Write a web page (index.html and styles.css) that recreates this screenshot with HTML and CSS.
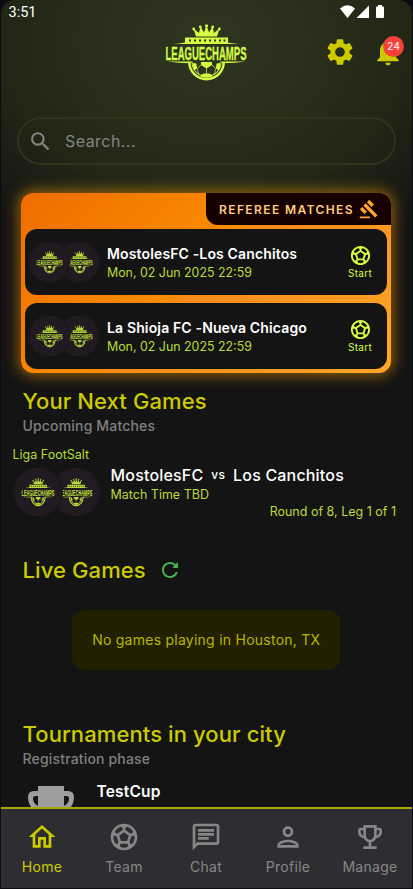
FILE: index.html
```
<!DOCTYPE html>
<html lang="en">
<head>
  <meta charset="UTF-8" />
  <meta name="viewport" content="width=device-width, initial-scale=1.0"/>
  <title>LeagueChamps</title>
  <link rel="stylesheet" href="styles.css">
</head>
<body>
  <!-- Shared symbols -->
  <svg class="symbols">
    <symbol id="logo" viewBox="0 0 84 58" preserveAspectRatio="none">
      <path d="M32 12.500L29.500 4.500 35 9 36.500 2.500 40 8.500 42.500 1 45 8.500 48.500 2.500 50 9 55.500 4.500 53 12.500z"/>
      <circle cx="29.700" cy="5" r="1.400"/><circle cx="36.300" cy="3" r="1.400"/><circle cx="42.500" cy="1.800" r="1.600"/>
      <circle cx="48.700" cy="3" r="1.400"/><circle cx="55.300" cy="5" r="1.400"/>
      <path fill-rule="evenodd" d="M21 13.500h43v6H21zM25 15.500v2h2v-2zM30 15.500v2h2v-2zM35 15.500v2h2v-2zM40 15.500v2h2v-2zM45 15.500v2h2v-2zM50 15.500v2h2v-2zM55 15.500v2h2v-2zM59.500 15.500v2h2v-2z"/>
      <path d="M10 20Q20 19.200 23 18h38Q64 19.200 75 20zM3 37.500h26l-3 1.700Q14 39 3 37.500zM82 37.500H56l3 1.700Q71 39 82 37.500z"/>
      <path d="M24 38a18.500 18.500 0 0 0 37 0h-2.500a16 16 0 0 1-32 0z"/>
      <path d="M27.500 38a15 15 0 0 0 30 0h-1a14 14 0 0 1-28 0z"/>
      <path d="M37 38h11v3l-5.500 3.500-5.500-3.500zM28.500 39l4 .5.500 5-3 2zM56.500 39l-4 .5-.5 5 3 2zM37.500 50.500l2.500-1h5l2.500 1 1.500 1.700a15 15 0 0 1-13 0z"/>
      <path class="seam" d="M42.500 44v6M37 41l-4 3.500 2 6M48 41l4 3.500-2 6"/>
      <text x="1.500" y="35.700" textLength="81" lengthAdjust="spacingAndGlyphs">LEAGUECHAMPS</text>
    </symbol>
    <symbol id="ball" viewBox="0 0 24 24">
      <path d="M12 2C6.480 2 2 6.480 2 12s4.480 10 10 10 10-4.480 10-10S17.520 2 12 2zm1 3.300l1.350-.95c1.820.56 3.370 1.760 4.380 3.340l-.39 1.340-1.350.46L13 6.700V5.300zm-3.350-.95L11 5.300v1.400L7.010 9.490l-1.350-.46-.39-1.340c1.010-1.570 2.560-2.770 4.380-3.340zM7.080 17.110l-1.140.1C4.730 15.810 4 13.990 4 12c0-.12.01-.23.02-.35l1-.73 1.380.48 1.460 4.340-.78 1.370zm7.420 2.480c-.79.26-1.630.41-2.500.41s-1.710-.15-2.500-.41l-.69-1.490.64-1.100h5.110l.64 1.110-.7 1.480zM14.270 15H9.730l-1.350-4.020L12 8.440l3.630 2.540L14.270 15zm3.790 2.210l-1.140-.1-.79-1.370 1.460-4.340 1.390-.47 1 .73c.01.11.02.22.02.34 0 1.990-.73 3.810-1.940 5.210z"/>
    </symbol>
  </svg>

  <div class="phone">
    <main class="content">
      <div class="status-bar">
        <span>3:51</span>
        <svg class="status-icons" viewBox="0 0 46 14">
          <path d="M0 3.500Q7.500-3 15 3.500L7.500 13z"/>
          <path d="M29 .5V13H16.500z"/>
          <path d="M38 0h4v1.500h1a1 1 0 0 1 1 1V12a1 1 0 0 1-1 1h-6a1 1 0 0 1-1-1V2.500a1 1 0 0 1 1-1h1z"/>
        </svg>
      </div>

      <header class="header">
        <svg class="header-logo logo"><use href="#logo"/></svg>
        <div class="header-actions">
          <svg class="icon" viewBox="0 0 24 24"><path d="M19.140 12.940c.04-.3.06-.61.06-.94 0-.32-.02-.64-.07-.94l2.030-1.580c.18-.14.23-.41.12-.61l-1.920-3.320c-.12-.22-.37-.29-.59-.22l-2.390.96c-.5-.38-1.030-.7-1.620-.94l-.36-2.540c-.04-.24-.24-.41-.48-.41h-3.840c-.24 0-.43.17-.47.41l-.36 2.540c-.59.24-1.130.57-1.620.94l-2.390-.96c-.22-.08-.47 0-.59.22L2.740 8.870c-.12.21-.08.47.12.61l2.030 1.580c-.05.3-.09.63-.09.94s.02.64.07.94l-2.030 1.580c-.18.14-.23.41-.12.61l1.920 3.320c.12.22.37.29.59.22l2.390-.96c.5.38 1.030.7 1.620.94l.36 2.540c.05.24.24.41.48.41h3.840c.24 0 .44-.17.47-.41l.36-2.540c.59-.24 1.130-.56 1.620-.94l2.390.96c.22.08.47 0 .59-.22l1.920-3.320c.12-.22.07-.47-.12-.61l-2.010-1.580zM12 15.600c-1.980 0-3.600-1.620-3.600-3.600s1.620-3.600 3.600-3.600 3.600 1.620 3.600 3.600-1.620 3.600-3.600 3.600z"/></svg>
          <div class="bell">
            <svg class="icon" viewBox="0 0 24 24"><path d="M12 22c1.100 0 2-.9 2-2h-4c0 1.100.9 2 2 2zm6-6v-5c0-3.070-1.640-5.640-4.500-6.320V4c0-.83-.67-1.500-1.500-1.500s-1.500.67-1.500 1.500v.68C7.630 5.360 6 7.920 6 11v5l-2 2v1h16v-1l-2-2z"/></svg>
            <span class="badge">24</span>
          </div>
        </div>
      </header>

      <div class="search">
        <svg viewBox="0 0 24 24"><path d="M15.500 14h-.79l-.28-.27C15.410 12.590 16 11.110 16 9.500 16 5.910 13.090 3 9.500 3S3 5.910 3 9.500 5.910 16 9.500 16c1.610 0 3.090-.59 4.230-1.570l.27.28v.79l5 4.990L20.490 19l-4.990-5zm-6 0C7.010 14 5 11.990 5 9.500S7.010 5 9.500 5 14 7.010 14 9.500 11.990 14 9.500 14z"/></svg>
        <span>Search...</span>
      </div>

      <section class="referee">
        <div class="referee-tab">
          <span>REFEREE MATCHES</span>
          <svg viewBox="0 0 24 24"><path d="M1 21h12v2H1zM5.245 8.070l2.830-2.827 14.140 14.142-2.828 2.828zM12.317 1l5.657 5.656-2.830 2.830-5.654-5.660zM3.825 9.485l5.657 5.657-2.828 2.828-5.657-5.657z"/></svg>
        </div>
        <div class="match-card">
          <div class="teams">
            <div class="team"><svg class="logo"><use href="#logo"/></svg></div>
            <div class="team"><svg class="logo"><use href="#logo"/></svg></div>
          </div>
          <div class="match-info">
            <div class="match-name"><span>MostolesFC -</span><span>Los Canchitos</span></div>
            <div class="match-date">Mon, 02 Jun 2025 22:59</div>
          </div>
          <div class="start">
            <svg><use href="#ball"/></svg>
            <span>Start</span>
          </div>
        </div>
        <div class="match-card">
          <div class="teams">
            <div class="team"><svg class="logo"><use href="#logo"/></svg></div>
            <div class="team"><svg class="logo"><use href="#logo"/></svg></div>
          </div>
          <div class="match-info">
            <div class="match-name"><span>La Shioja FC -</span><span>Nueva Chicago</span></div>
            <div class="match-date">Mon, 02 Jun 2025 22:59</div>
          </div>
          <div class="start">
            <svg><use href="#ball"/></svg>
            <span>Start</span>
          </div>
        </div>
      </section>

      <section class="next">
        <h2>Your Next Games</h2>
        <p class="subtitle">Upcoming Matches</p>
        <div class="league">Liga FootSalt</div>
        <div class="next-game">
          <div class="teams big">
            <div class="team"><svg class="logo"><use href="#logo"/></svg></div>
            <div class="team"><svg class="logo"><use href="#logo"/></svg></div>
          </div>
          <div class="next-info">
            <div class="next-name"><span>MostolesFC</span><small>vs</small><span>Los Canchitos</span></div>
            <div class="next-time">Match Time TBD</div>
            <div class="next-round">Round of 8, Leg 1 of 1</div>
          </div>
        </div>
      </section>

      <section class="live">
        <div class="live-title">
          <h2>Live Games</h2>
          <svg viewBox="0 0 24 24"><path d="M17.650 6.350C16.200 4.900 14.210 4 12 4c-4.420 0-7.990 3.580-7.990 8s3.570 8 7.990 8c3.730 0 6.840-2.550 7.730-6h-2.080c-.82 2.330-3.040 4-5.650 4-3.310 0-6-2.690-6-6s2.690-6 6-6c1.660 0 3.140.69 4.220 1.780L14.500 10H20V4l-2.350 2.350z"/></svg>
        </div>
        <div class="live-empty">No games playing in Houston, TX</div>
      </section>

      <section class="tournaments">
        <h2>Tournaments in your city</h2>
        <p class="subtitle">Registration phase</p>
        <div class="cup">
          <svg viewBox="0 0 46 46"><path fill-rule="evenodd" d="M10 0h26v5h4q6 0 6 6 0 10-9 15-4 3-9 4v6h6v6H12v-6h6v-6q-5-1-9-4Q0 21 0 11 0 5 6 5h4zM10 10H7.500Q5 10 5 12.500 5 17 10 20zM36 10v10q5-3 5-7.500 0-2.500-2.500-2.500z"/></svg>
          <span>TestCup</span>
        </div>
      </section>
    </main>

    <nav class="nav">
      <a class="nav-item active">
        <svg viewBox="0 0 24 24"><path d="M12 5.690l5 4.500V18h-2v-6H9v6H7v-7.810l5-4.500M12 3L2 12h3v8h6v-6h2v6h6v-8h3L12 3z"/></svg>
        <span>Home</span>
      </a>
      <a class="nav-item">
        <svg><use href="#ball"/></svg>
        <span>Team</span>
      </a>
      <a class="nav-item">
        <svg viewBox="0 0 24 24"><path d="M4 4h16v12H5.170L4 17.170V4m0-2c-1.100 0-1.990.9-1.990 2L2 22l4-4h14c1.100 0 2-.9 2-2V4c0-1.100-.9-2-2-2H4zm2 10h8v2H6v-2zm0-3h12v2H6V9zm0-3h12v2H6V6z"/></svg>
        <span>Chat</span>
      </a>
      <a class="nav-item">
        <svg viewBox="0 0 24 24"><path d="M12 6c1.100 0 2 .9 2 2s-.9 2-2 2-2-.9-2-2 .9-2 2-2m0 10c2.700 0 5.800 1.290 6 2H6c.23-.72 3.310-2 6-2m0-12C9.790 4 8 5.790 8 8s1.790 4 4 4 4-1.790 4-4-1.790-4-4-4zm0 10c-2.670 0-8 1.340-8 4v2h16v-2c0-2.660-5.330-4-8-4z"/></svg>
        <span>Profile</span>
      </a>
      <a class="nav-item">
        <svg viewBox="0 0 24 24"><path d="M19 5h-2V3H7v2H5c-1.100 0-2 .9-2 2v1c0 2.550 1.920 4.630 4.390 4.940.63 1.500 1.980 2.630 3.610 2.960V19H7v2h10v-2h-4v-3.100c1.630-.33 2.980-1.460 3.610-2.960C19.080 12.630 21 10.550 21 8V7c0-1.100-.9-2-2-2zM5 8V7h2v3.820C5.840 10.400 5 9.300 5 8zm7 6c-1.650 0-3-1.350-3-3V5h6v6c0 1.650-1.350 3-3 3zm7-6c0 1.300-.84 2.400-2 2.820V7h2v1z"/></svg>
        <span>Manage</span>
      </a>
    </nav>
  </div>
</body>
</html>
```

FILE: styles.css
```
* {
  box-sizing: border-box;
}

body {
  margin: 0;
  background: #0b0c10;
  font-family: Inter, "Liberation Sans", sans-serif;
  color: #fff;
}

svg {
  display: block;
  flex-shrink: 0;
  fill: currentColor;
}

.symbols {
  position: absolute;
  width: 0;
  height: 0;
}

.phone {
  display: flex;
  flex-direction: column;
  width: 411px;
  height: 888px;
  margin-left: 1px;
  border-radius: 14px 14px 0 0;
  background: radial-gradient(ellipse 300px 240px at 205px 40px, #2f351f 0%, #292e1b 40%, #212615 68%, #141414 100%) #141414;
  overflow: hidden;
}

.content {
  flex: 1;
  min-height: 0;
  overflow: hidden;
}

.status-bar {
  display: flex;
  justify-content: space-between;
  align-items: center;
  height: 24px;
  padding: 0 26px 0 7.500px;
  font: 400 14.500px Roboto, sans-serif;
}

.status-icons {
  width: 46px;
  height: 14px;
}

/* Header */
.logo {
  color: #d4fc43;
}

#logo text {
  font: bold 18.500px "Liberation Sans Narrow", "Liberation Sans", sans-serif;
  stroke: currentColor;
  stroke-width: 0.3;
}

.seam {
  fill: none;
  stroke: currentColor;
  stroke-width: 0.7;
}

.header {
  display: grid;
  grid-template-columns: 1fr 84px 1fr;
  height: 93px;
}

.header-logo {
  grid-column: 2;
  width: 84px;
  height: 58px;
  margin-left: -1px;
}

.header-actions {
  display: flex;
  justify-content: flex-end;
  gap: 16px;
  padding: 12px 8px 0 0;
  color: #cccb00;
}

.header-actions .icon {
  width: 32px;
  height: 32px;
}

.bell {
  position: relative;
}

.badge {
  position: absolute;
  top: 0;
  right: 0;
  width: 21px;
  height: 21px;
  border-radius: 50%;
  background: #f44336;
  color: #fff;
  font-size: 10.500px;
  line-height: 22px;
  text-align: center;
}

.search {
  display: flex;
  align-items: center;
  gap: 12px;
  height: 48px;
  margin: 0 16px;
  padding-left: 9px;
  border: 2px solid #35321c;
  border-radius: 24px;
  color: #858585;
  font-size: 16px;
  letter-spacing: 0.450px;
}

.search svg {
  width: 25px;
  height: 25px;
}

/* Referee matches */
.referee {
  display: flex;
  flex-direction: column;
  gap: 8px;
  height: 180px;
  margin: 28px 21px 0 20px;
  padding: 0 4px;
  border-radius: 12px;
  background: linear-gradient(135deg, #ef6c00, #fb8c00 45%, #f98a1b 50%, #ffa726);
  box-shadow: 0 0 14px 3px rgba(255, 160, 0, 0.5);
}

.referee-tab {
  display: flex;
  align-self: flex-end;
  justify-content: space-between;
  align-items: center;
  width: 185px;
  height: 32px;
  margin: 0 -4px -4px 0;
  padding: 0 12px 0 13px;
  border-radius: 0 12px 0 12px;
  background: #170000;
  color: #ffcc80;
  font-size: 12px;
  font-weight: 600;
  letter-spacing: 1.400px;
}

.referee-tab svg {
  width: 20px;
  height: 20px;
  color: #ffa726;
}

.match-card {
  display: flex;
  align-items: center;
  height: 66px;
  padding: 0 12px 0 4px;
  border-radius: 12px;
  background: #141414;
}

.teams {
  display: flex;
  width: 70px;
}

.team {
  position: relative;
  z-index: 1;
  display: flex;
  align-items: center;
  justify-content: center;
  flex-shrink: 0;
  width: 40px;
  height: 40px;
  border-radius: 50%;
  background: #211a20;
  box-shadow: 0 0 0 1px #1a171a;
}

.team + .team {
  z-index: 0;
  margin-left: -10px;
}

.team .logo {
  width: 27px;
  height: 23px;
  color: #b9d93b;
}

.teams.big {
  width: 86px;
}

.big .team {
  width: 48px;
  height: 48px;
}

.big .team .logo {
  width: 34px;
  height: 29px;
}

.match-info {
  flex: 1;
  padding: 2px 0 0 8px;
}

.match-name {
  font-size: 14px;
  font-weight: 600;
  line-height: 18px;
  letter-spacing: 0.140px;
  white-space: nowrap;
}

.match-date {
  color: #b9dc38;
  font-size: 12.400px;
  line-height: 19px;
}

.start {
  display: flex;
  flex-direction: column;
  align-items: center;
  width: 30px;
  color: #d4fc43;
  font-size: 10px;
  letter-spacing: 0.300px;
}

.start svg {
  width: 23px;
  height: 23px;
  margin-top: -1px;
}

/* Sections */
h2 {
  margin: 0;
  color: #cccb00;
  font-size: 22px;
  font-weight: 550;
  line-height: 28px;
  letter-spacing: 0.100px;
}

.subtitle {
  margin: 0;
  color: #808080;
  font-size: 14px;
  font-weight: 500;
  line-height: 22px;
  letter-spacing: 0.170px;
}

.next {
  padding: 14px 16px 0 21.500px;
}

.league {
  margin: 8px 0 3px -10px;
  color: #b9dc38;
  font-size: 12.500px;
  line-height: 20px;
}

.next-game {
  display: flex;
  margin-left: -8.500px;
}

.next-info {
  flex: 1;
  margin-top: -2px;
  padding-left: 10.500px;
  color: #b9dc38;
  font-size: 12.500px;
}

.next-name {
  display: flex;
  align-items: center;
  gap: 8px;
  color: #fff;
  font-size: 16px;
  font-weight: 550;
  line-height: 18px;
  letter-spacing: 0.180px;
}

.next-name small {
  font-size: 12px;
}

.next-time {
  padding-top: 1px;
  line-height: 20px;
}

.next-round {
  line-height: 14px;
  text-align: right;
}

.live {
  padding: 37px 22px 0 21.500px;
}

.live-title {
  display: flex;
  align-items: center;
  gap: 12px;
}

.live-title svg {
  width: 24px;
  height: 24px;
  color: #4caf50;
}

.live-empty {
  width: 268px;
  height: 60px;
  margin: 26px auto 0;
  border-radius: 12px;
  background: #222000;
  color: #b8b700;
  font-size: 14px;
  line-height: 60px;
  letter-spacing: 0.250px;
  text-align: center;
}

.tournaments {
  padding: 50px 22px 0 21.500px;
}

.cup {
  display: flex;
  padding: 16px 0 0 5px;
  color: #9e9e9e;
}

.cup svg {
  width: 46px;
  height: 46px;
}

.cup span {
  padding-left: 23px;
  color: #fff;
  font-size: 15.500px;
  font-weight: 600;
  line-height: 12px;
  letter-spacing: 0.200px;
}

/* Bottom navigation */
.nav {
  display: flex;
  flex-shrink: 0;
  height: 81px;
  padding-right: 1px;
  border-top: 2px solid #a9a800;
  background: #2e2d32;
  color: #878787;
}

.nav-item {
  display: flex;
  flex: 1 1 0;
  flex-direction: column;
  align-items: center;
  gap: 5px;
  padding-top: 12px;
  font-size: 14px;
  line-height: 17px;
  letter-spacing: 0.300px;
}

.nav-item svg {
  width: 32px;
  height: 32px;
}

.nav-item.active {
  color: #cccb00;
}
```
